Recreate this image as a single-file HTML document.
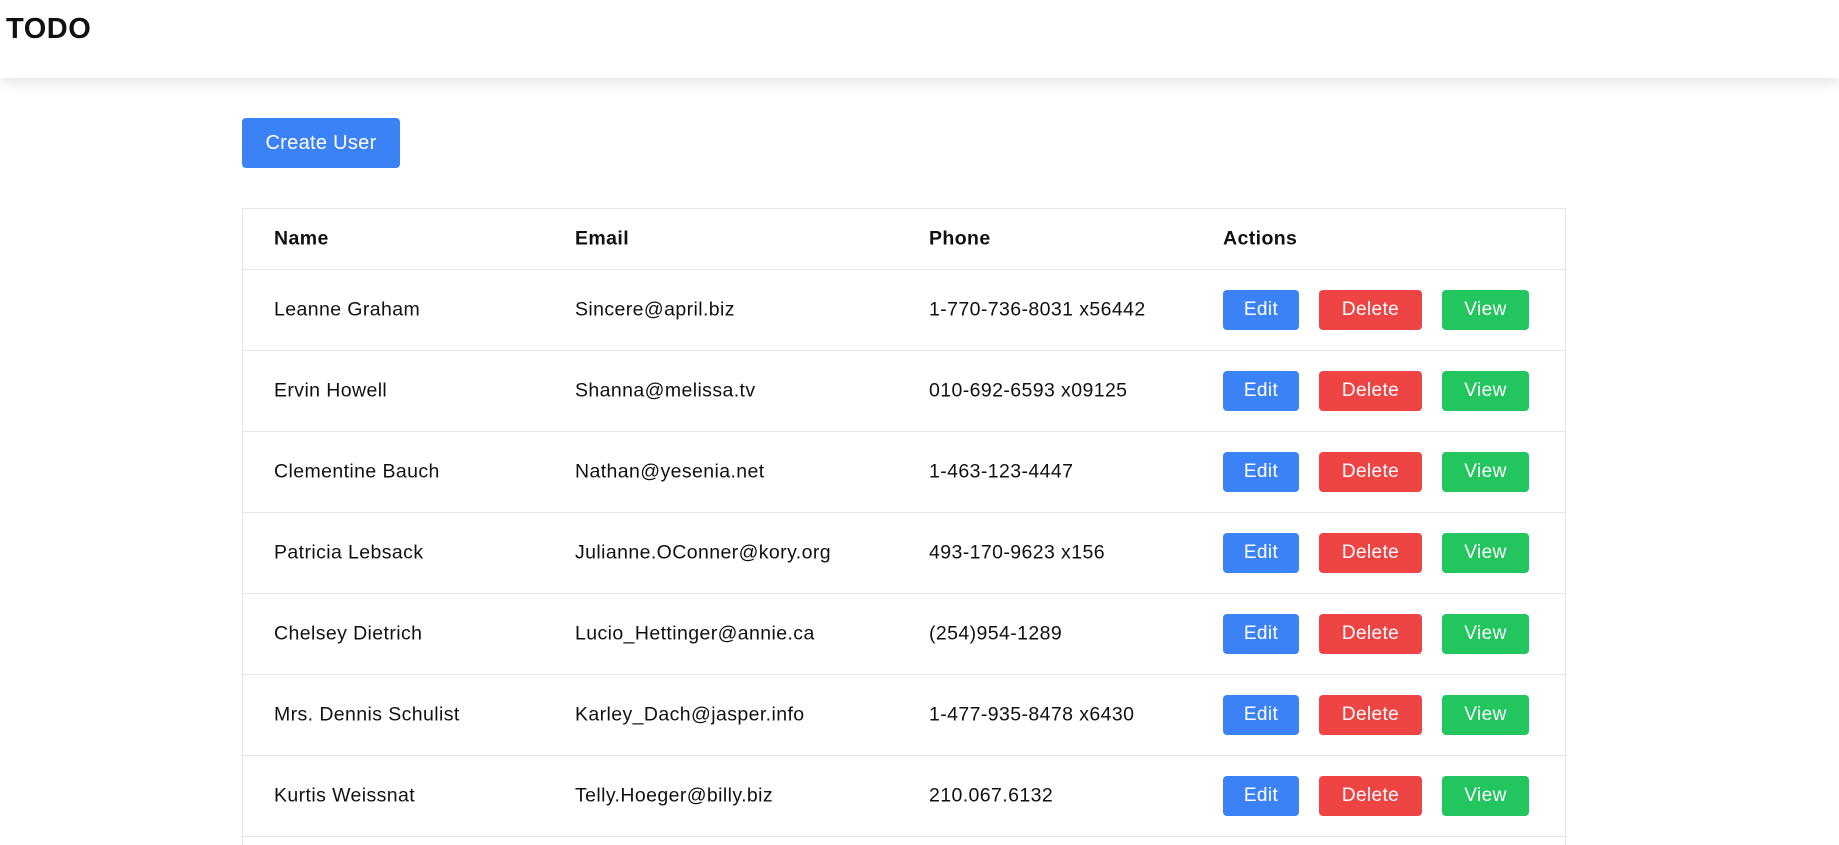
<!DOCTYPE html>
<html><head><meta charset="utf-8"><style>
*{box-sizing:border-box;margin:0;padding:0}
html,body{width:1839px;height:845px;overflow:hidden}
body{background:#fff;font-family:"Liberation Sans",Arial,sans-serif;color:#111}
.wrap{position:relative;width:1839px;height:845px;overflow:hidden}
.hdr{position:absolute;left:0;top:0;width:1839px;height:78px;background:#fff;box-shadow:0 4px 14px rgba(0,0,0,.12);z-index:2}
.hdr h1{position:absolute;left:6px;top:13px;font-size:29px;font-weight:bold;letter-spacing:0.5px}
.create{position:absolute;left:242px;top:118px;width:158px;height:50px;background:#3b82f6;color:#fff;border-radius:4px;font-size:20px;line-height:50px;text-align:center;letter-spacing:.3px}
.tbl{position:absolute;left:242px;top:208px;width:1324px;border:1px solid #e5e5e5;border-bottom:none}
.row{position:relative;height:81px;border-bottom:1px solid #e5e5e5;font-size:19.5px;letter-spacing:.4px}
.row.h{height:61px;font-weight:bold}
.row span{position:absolute;top:50%;transform:translateY(-50%);white-space:nowrap}
.c1{left:31px}.c2{left:332px}.c3{left:686px}.c4{left:980px}
.b{position:absolute;top:20px;height:40px;line-height:40px;color:#fff;text-align:center;border-radius:4px;font-size:19px}
.e{left:980px;width:76px;background:#3b82f6}
.d{left:1076px;width:103px;background:#ef4444}
.v{left:1199px;width:87px;background:#22c55e}
</style></head><body><div class="wrap">
<div class="hdr"><h1>TODO</h1></div>
<div class="create">Create User</div>
<div class="tbl">
<div class="row h"><span class="c1">Name</span><span class="c2">Email</span><span class="c3">Phone</span><span class="c4">Actions</span></div>
<div class="row"><span class="c1">Leanne Graham</span><span class="c2">Sincere@april.biz</span><span class="c3">1-770-736-8031 x56442</span><div class="b e">Edit</div><div class="b d">Delete</div><div class="b v">View</div></div>
<div class="row"><span class="c1">Ervin Howell</span><span class="c2">Shanna@melissa.tv</span><span class="c3">010-692-6593 x09125</span><div class="b e">Edit</div><div class="b d">Delete</div><div class="b v">View</div></div>
<div class="row"><span class="c1">Clementine Bauch</span><span class="c2">Nathan@yesenia.net</span><span class="c3">1-463-123-4447</span><div class="b e">Edit</div><div class="b d">Delete</div><div class="b v">View</div></div>
<div class="row"><span class="c1">Patricia Lebsack</span><span class="c2">Julianne.OConner@kory.org</span><span class="c3">493-170-9623 x156</span><div class="b e">Edit</div><div class="b d">Delete</div><div class="b v">View</div></div>
<div class="row"><span class="c1">Chelsey Dietrich</span><span class="c2">Lucio_Hettinger@annie.ca</span><span class="c3">(254)954-1289</span><div class="b e">Edit</div><div class="b d">Delete</div><div class="b v">View</div></div>
<div class="row"><span class="c1">Mrs. Dennis Schulist</span><span class="c2">Karley_Dach@jasper.info</span><span class="c3">1-477-935-8478 x6430</span><div class="b e">Edit</div><div class="b d">Delete</div><div class="b v">View</div></div>
<div class="row"><span class="c1">Kurtis Weissnat</span><span class="c2">Telly.Hoeger@billy.biz</span><span class="c3">210.067.6132</span><div class="b e">Edit</div><div class="b d">Delete</div><div class="b v">View</div></div>
<div class="row"><span class="c1">Nicholas Runolfsdottir V</span><span class="c2">Sherwood@rosamond.me</span><span class="c3">586.493.6943 x140</span><div class="b e">Edit</div><div class="b d">Delete</div><div class="b v">View</div></div>
</div>
</div></body></html>
